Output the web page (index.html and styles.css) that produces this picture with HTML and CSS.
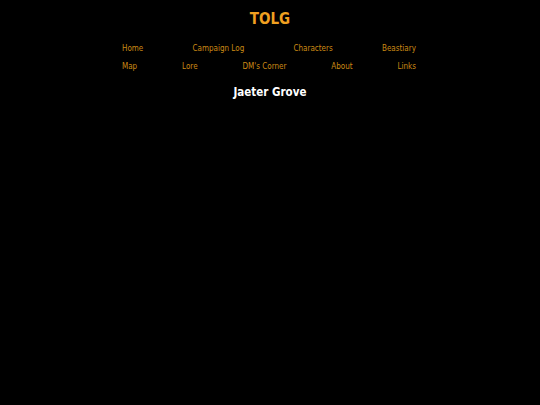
FILE: index.html
```html
<!DOCTYPE html>
<html>
<head>
<meta charset="utf-8">
<link rel="stylesheet" href="styles.css">
</head>
<body>
<header class="site-header">
  <h1 class="site-title">TOLG</h1>
  <nav class="site-nav">
    <div class="nav-row">
      <a href="#">Home</a>
      <a href="#">Campaign Log</a>
      <a href="#">Characters</a>
      <a href="#">Beastiary</a>
    </div>
    <div class="nav-row">
      <a href="#">Map</a>
      <a href="#">Lore</a>
      <a href="#">DM's Corner</a>
      <a href="#">About</a>
      <a href="#">Links</a>
    </div>
  </nav>
</header>
<main class="content">
  <h2 class="page-title">Jaeter Grove</h2>
</main>
</body>
</html>
```

FILE: styles.css
```css
html, body {
  margin: 0;
  padding: 0;
  background: #000;
  font-family: "DejaVu Sans Condensed", "DejaVu Sans", Verdana, sans-serif;
}
.site-header {
  display: flex;
  flex-direction: column;
  align-items: center;
  padding-top: 11px;
}
.site-title {
  margin: 0;
  font-size: 15px;
  font-weight: bold;
  color: #f0a020;
  line-height: 17px;
}
.site-nav {
  width: 294px;
  margin: 16px 2px 0 0;
  display: flex;
  flex-direction: column;
  gap: 8px;
}
.nav-row {
  display: flex;
  justify-content: space-between;
  line-height: 10px;
}
.nav-row a {
  color: #cc8a14;
  font-size: 8px;
  text-decoration: none;
}
.content {
  display: flex;
  justify-content: center;
}
.page-title {
  margin: 13px 0 0;
  font-size: 11.5px;
  font-weight: bold;
  color: #fff;
  line-height: 15px;
}
```
